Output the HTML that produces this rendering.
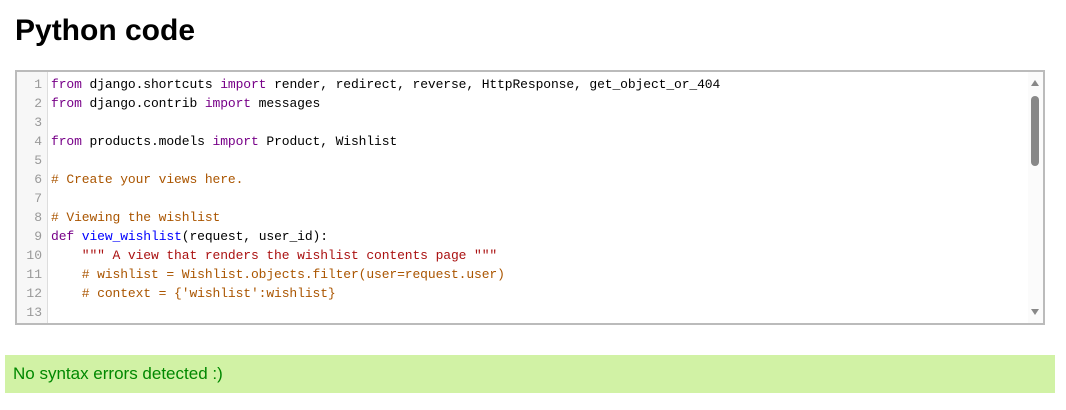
<!DOCTYPE html>
<html><head><style>
body{margin:0;background:#fff;width:1066px;height:410px;overflow:hidden;font-family:"Liberation Sans",sans-serif}
h1{position:absolute;left:15px;top:14px;margin:0;font-size:30px;font-weight:bold;color:#000}
.box{position:absolute;left:15px;top:70px;width:1026px;height:251px;border:2px solid #bbb;background:#fff;overflow:hidden}
.gut{position:absolute;left:0;top:0;width:30px;height:100%;background:#f7f7f7;border-right:1px solid #ddd}
.code{position:absolute;left:0;top:3px;font-family:"Liberation Mono",monospace;font-size:13px;letter-spacing:-0.11px;line-height:19px;white-space:pre}
.ln{display:inline-block;width:25px;text-align:right;color:#999;margin-right:9px;letter-spacing:0}
.k{color:#708}.c{color:#a50}.s{color:#a11}.d{color:#00f}
.sb{position:absolute;right:0;top:0;width:15px;height:100%;background:#fbfbfb}
.th{position:absolute;left:3px;top:24px;width:8px;height:70px;background:#888;border-radius:4px}
.up,.dn{position:absolute;left:3px;width:0;height:0;border-left:4.5px solid transparent;border-right:4.5px solid transparent}
.up{top:8px;border-bottom:6px solid #888}.dn{bottom:8px;border-top:6px solid #888}
.ok{position:absolute;left:5px;top:355px;width:1050px;height:38px;background:#d1f2a5;color:#080;font-size:17px;line-height:38px;box-sizing:border-box;padding-left:8px}
</style></head><body>
<h1>Python code</h1>
<div class="box"><div class="gut"></div>
<div class="code"><span class="ln">1</span><span class="k">from</span> django.shortcuts <span class="k">import</span> render, redirect, reverse, HttpResponse, get_object_or_404
<span class="ln">2</span><span class="k">from</span> django.contrib <span class="k">import</span> messages
<span class="ln">3</span>
<span class="ln">4</span><span class="k">from</span> products.models <span class="k">import</span> Product, Wishlist
<span class="ln">5</span>
<span class="ln">6</span><span class="c"># Create your views here.</span>
<span class="ln">7</span>
<span class="ln">8</span><span class="c"># Viewing the wishlist</span>
<span class="ln">9</span><span class="k">def</span> <span class="d">view_wishlist</span>(request, user_id):
<span class="ln">10</span>    <span class="s">""" A view that renders the wishlist contents page """</span>
<span class="ln">11</span>    <span class="c"># wishlist = Wishlist.objects.filter(user=request.user)</span>
<span class="ln">12</span>    <span class="c"># context = {'wishlist':wishlist}</span>
<span class="ln">13</span>
</div>
<div class="sb"><div class="up"></div><div class="th"></div><div class="dn"></div></div>
</div>
<div class="ok">No syntax errors detected :)</div>
</body></html>
